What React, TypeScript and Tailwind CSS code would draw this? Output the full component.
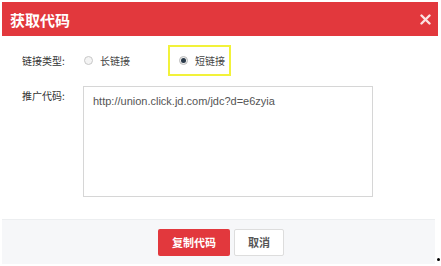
export default function App() {
  return (
    <div className="relative h-[266px] w-[441px] bg-white" style={{ fontFamily: '"Noto Sans CJK SC", "Liberation Sans", sans-serif' }}>
      <div className="ml-[2px] pt-[2px] w-[436px] h-[264px] flex flex-col">
        {/* Header */}
        <div className="h-[34px] bg-[#e2383d] flex items-center justify-between pl-[8px] pr-[6px]">
          <span className="text-[15px] font-bold text-white leading-none">获取代码</span>
          <svg width="11" height="11" viewBox="0 0 11 11" className="mr-[1px]">
            <path d="M1.5 1.5 L9.5 9.5 M9.5 1.5 L1.5 9.5" stroke="#fbe3e3" strokeWidth="2.4" strokeLinecap="round" />
          </svg>
        </div>

        {/* Body */}
        <div className="flex-1 pl-[20px] pt-[9px]">
          <div className="flex items-center h-[31px]">
            <span className="w-[62px] text-[10px] text-[#333]">链接类型:</span>
            <span className="w-[9px] h-[9px] rounded-full border border-[#c8c8c8] bg-[#f4f4f4]" />
            <span className="ml-[7px] text-[10px] text-[#444]">长链接</span>
            <div className="ml-[38px] w-[63px] h-[31px] border-2 border-[#f2f23a] flex items-center pl-[9px]">
              <span className="w-[9px] h-[9px] rounded-full border border-[#bbb] bg-[#eee] flex items-center justify-center">
                <span className="w-[5px] h-[5px] rounded-full bg-[#2b3a4a]" />
              </span>
              <span className="ml-[7px] text-[10px] text-[#444]">短链接</span>
            </div>
          </div>

          <div className="flex mt-[10px]">
            <span className="w-[61px] text-[10px] text-[#333] pt-[2px]">推广代码:</span>
            <div className="w-[290px] h-[111px] border border-[#d6d6d6] px-[9px] pt-[4px] leading-[14px]">
              <span className="text-[11px] text-[#555]" style={{ fontFamily: '"Liberation Sans", sans-serif' }}>
                http://union.click.jd.com/jdc?d=e6zyia
              </span>
            </div>
          </div>
        </div>

        {/* Footer */}
        <div className="h-[45px] w-[433px] bg-[#f6f7f9] border-t border-[#eceef0] flex items-center pl-[156px] gap-[4px]">
          <button className="w-[72px] h-[27px] rounded-[2px] bg-[#e2383d] text-white text-[11px] font-bold">复制代码</button>
          <button className="w-[50px] h-[27px] rounded-[2px] bg-white border border-[#ddd] text-[#555] text-[11px] font-bold">取消</button>
        </div>
      </div>
      <span className="absolute left-[437px] top-[258px] w-[3px] h-[3px] rounded-full bg-black" />
    </div>
  );
}
